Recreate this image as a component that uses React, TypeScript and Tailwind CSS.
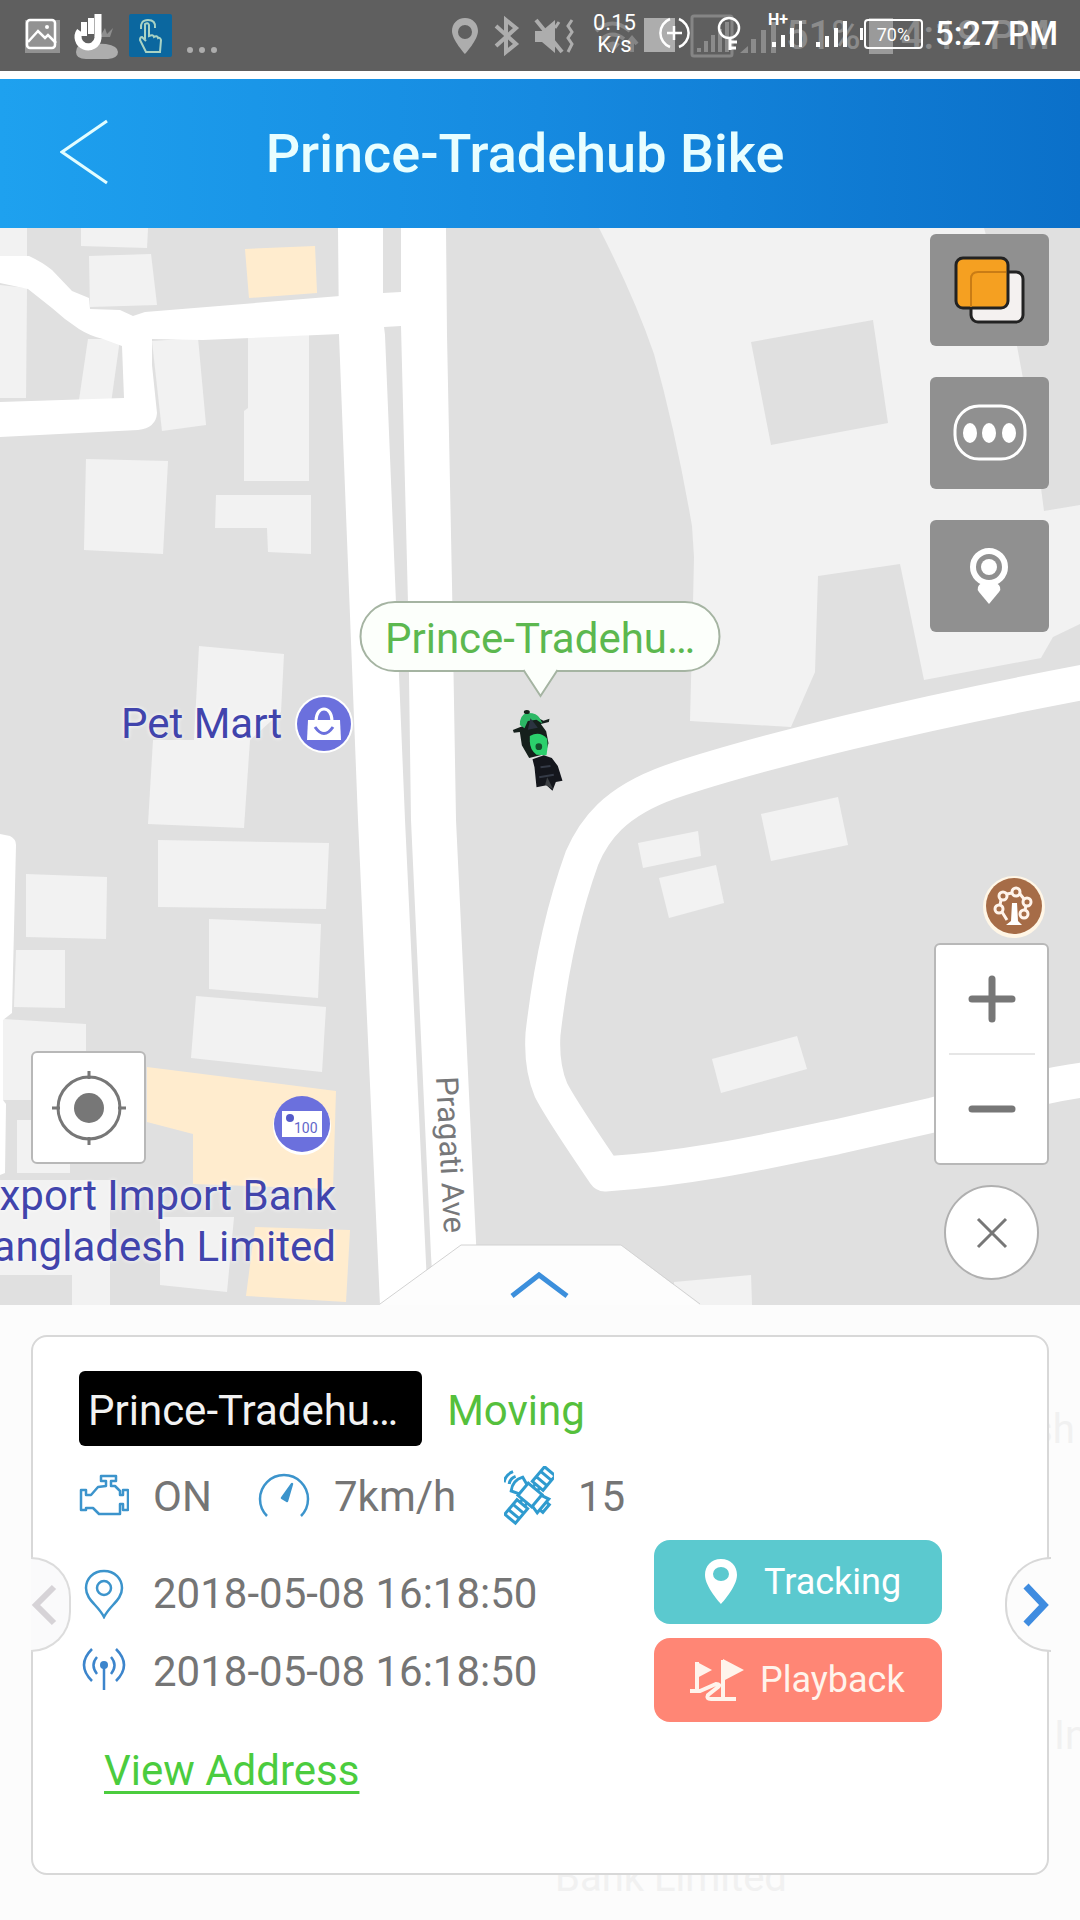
import type { ReactNode } from "react";

const buildings = [
  "0,0 27,0 27,30 0,28",
  "81,0 148,0 147,20 81,18",
  "89,28 151,26 157,77 90,79",
  "0,57 27,60 26,170 0,170",
  "88,111 120,111 111,175 79,172",
  "152,113 198,110 206,197 162,203",
  "248,109 309,107 309,253 244,253 244,183 248,180",
  "86,231 168,233 163,326 84,322",
  "216,267 311,267 311,326 268,324 267,300 215,300",
  "199,418 284,426 281,484 250,512 244,600 148,596 153,512 194,512",
  "158,612 329,615 326,681 158,679",
  "209,691 321,696 318,770 209,761",
  "196,768 326,779 322,844 191,830",
  "26,646 107,649 106,711 26,709",
  "16,722 65,722 65,780 14,779",
  "3,791 86,796 86,872 3,872",
  "17,892 70,892 70,945 17,945",
  "0,952 110,952 110,1077 72,1077 72,1047 0,1047",
  "160,989 234,989 227,1064 160,1057",
  "638,615 698,603 701,628 643,640",
  "659,650 716,637 724,675 669,690",
  "761,586 838,569 848,617 771,633",
  "712,831 797,808 807,841 721,865",
  "674,1054 751,1047 752,1077 674,1077",
];

const shops = [
  "245,21 315,18 317,65 249,70",
  "147,839 336,863 333,961 193,956 193,906 147,894",
  "255,999 350,1002 346,1074 246,1068",
];

function MapCanvas() {
  return (
    <svg
      className="absolute inset-0 h-full w-full"
      viewBox="0 0 1080 1077"
      preserveAspectRatio="xMidYMid slice"
      aria-hidden="true"
    >
      <rect width="1080" height="1077" fill="#e0e0e0" />
      <path
        fill="#f2f2f2"
        fillRule="evenodd"
        d="M599 0Q634 68 654 126Q676 205 692 298L694 329L693 375L690 493L791 499L815 444L818 348L900 336L924 452L1041 430L1053 409L1080 396V277L1044 283L1041 260L1022 145L1017 118L984 0ZM751 114L873 92L888 195L771 217Z"
      />
      {buildings.map((points) => (
        <polygon key={points} points={points} fill="#f2f2f2" />
      ))}
      {shops.map((points) => (
        <polygon key={points} points={points} fill="#ffecce" />
      ))}
      <g fill="#fff">
        <path d="M0 28H29Q42 34 52 42L72 63L89 70L90 81L120 82L133 88L145 84L340 68V106L203 112L152 111V137L157 185Q156 200 138 202L0 209V174L124 170L122 118L103 111Q90 108 79 101Q65 92 52 80L28 61L0 55Z" />
        <path d="M338 0H383V65L401 64V0H446L447 107L452 356L456 592L479 1077H434L431 1027L411 592L408 375L401 98L384 99L385 107L396 375L405 592L428 1077H380L358 592L339 107Z" />
        <path d="M0 606L10 608Q16 611 16 617L12 785L3 792V872L6 876L5 945L0 947Z" />
      </g>
      <path
        d="M1090 453C1000 470 900 492 850 504C780 521 720 537 670 554C614 574 594 602 582 630C562 685 550 745 543 806Q541 838 551 862Q560 880 605 946C700 940 790 918 836 909L933 887C1000 870 1040 857 1090 851"
        fill="none"
        stroke="#fff"
        strokeWidth="35"
        strokeLinejoin="round"
      />
      <text
        transform="translate(436 849) rotate(87)"
        fill="#77787a"
        fontSize="31"
        className="font-[Roboto,sans-serif]"
      >
        Pragati Ave
      </text>
    </svg>
  );
}

function StatusBar() {
  return (
    <div className="relative h-[71px] bg-[#5f5f5f] text-white">
      {/* dimmed icons of the bar underneath */}
      <div className="absolute inset-0 flex items-center justify-between text-[#adadad]">
        <svg width="240" height="71" viewBox="0 0 240 71" fill="currentColor" aria-hidden="true">
          <path d="M25 20h35v33H25z" opacity=".65" />
          <path d="M76 52q0-8 10-9l20 1q12 2 12 8 0 6-10 7H86q-10 0-10-7Z" />
          <path d="M96 35l3-5 2 5 4-7 2 6 6-6-3 9H94z" opacity=".6" />
          <rect x="129" y="14" width="43" height="43" rx="2" fill="#0b679f" />
          <path
            d="M146 41l-4-4q-2 0-2 3l6 12h14l1-12q-1-3-3-2-1-3-4-1-1-3-5-1V25q-1-3-4-1v15M141 29q-1-9 7-9t7 8"
            fill="none"
            stroke="#a9d3c4"
            strokeWidth="2"
          />
          <circle cx="190" cy="50" r="3" />
          <circle cx="202" cy="50" r="3" />
          <circle cx="214" cy="50" r="3" />
        </svg>
        <div className="flex items-center pr-[30px]">
          <svg width="340" height="71" viewBox="446 0 340 71" fill="currentColor" aria-hidden="true">
            <path d="M465 18c-8 0-13 6-13 13 0 9 13 23 13 23s13-14 13-23c0-7-5-13-13-13Zm0 7a7 7 0 1 1 0 14 7 7 0 0 1 0-14Z" fillRule="evenodd" />
            <path d="M496 26l20 18-10 8V20l10 8-20 18" fill="none" stroke="currentColor" strokeWidth="4" />
            <path d="M535 31h7l13-11v33l-13-11h-7z" />
            <path d="M536 20l26 32" stroke="currentColor" strokeWidth="4" />
            <path d="M559 22l-4 6M572 20l-4 6 4 6-4 6 4 6-4 8" fill="none" stroke="currentColor" strokeWidth="3" />
            <g fill="none" stroke="#858585" strokeWidth="4">
              <path d="M596 31q16-15 34 0M602 39q10-9 22 0" />
              <path d="M632 52V40M627 44l5-6 5 6" />
            </g>
            <path d="M613 52l-7-8q7-5 14 0z" fill="#858585" />
            <path d="M644 18h31v34h-31z" />
            <rect x="692" y="16" width="40" height="40" rx="2" fill="none" stroke="#858585" strokeWidth="3" />
            <path d="M697 52v-4h4v4zM704 52V41h4v11zM711 52V35h4v17zM718 52V29h4v23zM725 52V22h4v30z" fill="#8b8b8b" />
            <path d="M740 53l8-7v7zM751 53V39h5v14zM761 53V30h5v23zM771 53V22h5v31z" fill="#8b8b8b" />
          </svg>
          <div className="flex items-center gap-2 font-medium text-[#8b8b8b]">
            <span className="text-[40px]">51%</span>
            <span className="h-9 w-6 bg-[#9a9a9a]" />
            <span className="text-[40px]">4:19 PM</span>
          </div>
        </div>
      </div>
      <div className="relative flex h-[68px] items-center justify-between pr-[22px] pl-6">
        <svg width="80" height="50" viewBox="24 8 80 50" aria-hidden="true">
          <rect x="27" y="19" width="28" height="28" rx="3" fill="none" stroke="#fff" strokeWidth="2.5" />
          <path d="M28 41l10-11 7 7 3-3 8 8" fill="none" stroke="#fff" strokeWidth="2.5" />
          <circle cx="47" cy="26" r="2" fill="#fff" />
          <path d="M98 13v24a10 10 0 1 1-18-7" fill="none" stroke="#fff" strokeWidth="7" />
          <path d="M81 21h6v14h-6zM88 17h6v16h-6z" fill="#fff" />
        </svg>
        <div className="flex items-center">
          <div className="mr-5 text-center text-[22px] leading-[22px]">
            0.15
            <br />
            K/s
          </div>
          <svg width="112" height="54" viewBox="652 7 112 54" fill="none" stroke="#fff" strokeWidth="2.5" aria-hidden="true">
            <path d="M666 19a15 15 0 0 0 0 28M675 47a15 15 0 0 0 0-28M663 33h15M670 26v14" />
            <circle cx="725" cy="28" r="10" />
            <path d="M726 38v12M726 42h7M726 48h6" strokeWidth="3" />
          </svg>
          <div className="relative flex h-9 items-end gap-3">
            <span className="absolute -top-1.5 left-0 text-[16px] leading-5 font-bold">H+</span>
            <svg width="34" height="36" fill="#fff" aria-hidden="true">
              <path d="M4 26h4v5H4zM13 19h4v12h-4zM22 12h4v19h-4zM31 5h3v26h-3z" />
            </svg>
            <svg width="34" height="36" fill="#fff" aria-hidden="true">
              <path d="M2 26h4v5H2zM11 20h4v11h-4zM20 12h4v19h-4zM29 5h4v26h-4z" />
            </svg>
          </div>
          <span className="ml-3 h-3 w-[3px] bg-white" />
          <span className="mr-3 ml-px flex h-[30px] w-[59px] items-center justify-center rounded border-2 border-white text-[18px]">
            70%
          </span>
          <span className="text-[33px] font-medium">5:27 PM</span>
        </div>
      </div>
    </div>
  );
}

function ToolButton({ label, children }: { label: string; children: ReactNode }) {
  return (
    <button aria-label={label} className="flex h-[112px] w-[119px] items-center justify-center rounded-md bg-[#909090]">
      {children}
    </button>
  );
}

function MapPins() {
  return (
    <>
      <div className="absolute top-[464px] left-[121px] flex items-center gap-3 text-[42px] text-[#4144ac] [text-shadow:0_0_4px_white]">
        Pet Mart
        <svg width="60" height="60" viewBox="0 0 60 60" aria-hidden="true">
          <circle cx="30" cy="30" r="29" fill="#fff" />
          <circle cx="30" cy="30" r="27" fill="#6b70dd" />
          <path d="M14 26h32l1 20H13z" fill="#fff" />
          <path d="M22 27c0-16 16-16 16 0" fill="none" stroke="#fff" strokeWidth="3" />
          <path d="M21 33q9 13 18 0" fill="none" stroke="#6b70dd" strokeWidth="3" />
        </svg>
      </div>
      <svg className="absolute top-[866px] left-[272px]" width="60" height="62" viewBox="0 0 60 62" aria-hidden="true">
        <circle cx="30" cy="32" r="29" fill="#fff" />
        <circle cx="30" cy="30" r="28" fill="#6b70dd" />
        <path d="M10 17h40v26H10z" fill="#fff" />
        <circle cx="18" cy="24" r="4" fill="#555bc9" />
        <text x="22" y="39" fontSize="14" fill="#6266c9" className="font-[Roboto,sans-serif]">
          100
        </text>
      </svg>
      <p className="absolute top-[942px] right-[calc(100%-336px)] text-right text-[42px] leading-[51px] whitespace-nowrap text-[#4144ac] [text-shadow:0_0_4px_white]">
        Export Import Bank
        <br />
        Bangladesh Limited
      </p>
      <svg className="absolute top-[648px] right-[35px]" width="62" height="62" viewBox="0 0 62 62" aria-hidden="true">
        <circle cx="31" cy="31" r="31" fill="#fff6e6" />
        <circle cx="31" cy="30" r="28" fill="#a66c47" />
        <g fill="none" stroke="#fff3ea" strokeWidth="3">
          <circle cx="20" cy="20" r="4" />
          <circle cx="33" cy="16" r="4" />
          <circle cx="44" cy="26" r="4" />
          <circle cx="16" cy="33" r="4" />
          <circle cx="41" cy="38" r="4" />
          <path d="M24 18l5-1M37 18l4 5M18 24l-1 5M43 30l-1 4M19 36l5 8" />
        </g>
        <path d="M29 27h5l1 18 4 4H23l5-4z" fill="#fff" />
      </svg>
    </>
  );
}

function Vehicle() {
  return (
    <div className="absolute top-[373px] left-1/2 flex -translate-x-1/2 flex-col items-center">
      <div className="flex h-[71px] w-[361px] items-center justify-center rounded-full border-2 border-[#a5b4a2] bg-[#fcfffb] pt-1 text-[42px] text-[#5cb84f]">
        Prince-Tradehu…
      </div>
      <svg className="relative -mt-[3px]" width="36" height="29" viewBox="0 0 36 29" aria-hidden="true">
        <path d="M1 0L18 27L35 0" fill="#fcfffb" />
        <path d="M1 1L18 27L35 1" fill="none" stroke="#a5b4a2" strokeWidth="2" />
      </svg>
      <svg className="-mt-2" width="100" height="120" viewBox="0 0 300 360" aria-hidden="true">
        <path d="M67 120l30-12 8-26 26-4 28 14 18-6-2 10-24 6 16 22 7 36-10 32-48 12-22-38-6-40-18 2z" fill="#16201c" />
        <path d="M88 105q0-30 20-36 30-2 40 16l8 16-18-12-26 4-10 22z" fill="#2cb865" />
        <ellipse cx="109" cy="66" rx="9" ry="6" fill="#15221a" />
        <path d="M120 85l22 28-30 6z" fill="#2b3340" />
        <path d="M118 138q30-16 52 8 4 26-2 50l-30-2q-20-14-20-40z" fill="#2bd06c" />
        <circle cx="145" cy="170" r="10" fill="#14512e" />
        <path d="M126 208l34-12 24 8 18 24 14 44-20 4-10 26-18-16-30 6-6-60z" fill="#14161c" />
        <path d="M150 232l30-4M146 262l44-8" stroke="#343a46" strokeWidth="6" />
        <path d="M170 262l18 36-24-14z" fill="#3d4044" />
      </svg>
    </div>
  );
}

function MapControls() {
  return (
    <>
      <div className="absolute top-[6px] right-[31px] flex flex-col gap-[31px]">
        <ToolButton label="Map layers">
          <svg width="72" height="70" viewBox="0 0 72 70" aria-hidden="true">
            <rect x="17" y="17" width="52" height="50" rx="7" fill="#f4f1f0" stroke="#222" strokeWidth="3" />
            <rect x="2" y="3" width="52" height="50" rx="7" fill="#f5a021" stroke="#222" strokeWidth="3" />
            <path d="M17 52V24q0-7 7-7h28" fill="none" stroke="#c97c15" strokeWidth="2" />
          </svg>
        </ToolButton>
        <ToolButton label="More">
          <svg width="74" height="58" viewBox="0 0 74 58" fill="#fff" aria-hidden="true">
            <rect x="2" y="2" width="70" height="53" rx="24" fill="none" stroke="#fff" strokeWidth="3" />
            <ellipse cx="17" cy="29" rx="7" ry="10" />
            <ellipse cx="36" cy="29" rx="7" ry="10" />
            <ellipse cx="56" cy="29" rx="7" ry="10" />
          </svg>
        </ToolButton>
        <ToolButton label="Places">
          <svg width="42" height="58" viewBox="0 0 42 58" fill="#fff" aria-hidden="true">
            <circle cx="20" cy="20" r="16" fill="none" stroke="#fff" strokeWidth="6" />
            <circle cx="20" cy="20" r="8" />
            <path d="M14 35h12q8 5 4 10L20 57 10 45q-4-5 4-10Z" />
          </svg>
        </ToolButton>
      </div>

      <button
        aria-label="My location"
        className="absolute bottom-[141px] left-[31px] flex h-[113px] w-[115px] items-center justify-center rounded-md border-2 border-[#b8b8b8] bg-white"
      >
        <svg width="76" height="76" viewBox="0 0 76 76" fill="none" stroke="#777" strokeWidth="3" aria-hidden="true">
          <circle cx="38" cy="38" r="31" />
          <circle cx="38" cy="38" r="15" fill="#777" stroke="none" />
          <path d="M38 1v8M38 67v8M1 38h8M67 38h8" />
        </svg>
      </button>

      <div className="absolute right-[31px] bottom-[25px] flex flex-col items-center gap-5">
        <div className="flex w-[115px] flex-col items-center rounded-md border-2 border-[#b8b8b8] bg-white">
          <button aria-label="Zoom in" className="flex h-[108px] w-full items-center justify-center">
            <svg width="48" height="48" stroke="#777" strokeWidth="7" strokeLinecap="round" aria-hidden="true">
              <path d="M24 4v40M4 24h40" />
            </svg>
          </button>
          <span className="h-0.5 w-[86px] bg-[#e6e6e6]" />
          <button aria-label="Zoom out" className="flex h-[108px] w-full items-center justify-center">
            <svg width="48" height="48" stroke="#777" strokeWidth="7" strokeLinecap="round" aria-hidden="true">
              <path d="M4 24h40" />
            </svg>
          </button>
        </div>
        <button
          aria-label="Close"
          className="flex size-[95px] items-center justify-center rounded-full border-2 border-[#b0b0b0] bg-white"
        >
          <svg width="32" height="32" stroke="#777" strokeWidth="3" aria-hidden="true">
            <path d="M2 2l28 28M30 2L2 30" />
          </svg>
        </button>
      </div>

      <button aria-label="Expand details" className="absolute bottom-0 left-1/2 h-[61px] w-[320px] -translate-x-1/2">
        <svg width="320" height="61" viewBox="0 0 320 61" aria-hidden="true">
          <path d="M0 61L81 1H241L320 61Z" fill="#fdfdfd" />
          <path d="M0 60L81 1H241L320 60" fill="none" stroke="#d2d2d2" strokeWidth="1" />
          <path d="M132 52L159 31L187 52" fill="none" stroke="#3c8fdc" strokeWidth="5" />
        </svg>
      </button>
    </>
  );
}

function DetailsCard() {
  return (
    <section className="relative overflow-hidden bg-[#fcfcfc] px-[31px] pt-[30px] pb-[46px] text-[42px] leading-[50px] text-[#757575]">
      {/* neighbouring map labels faintly showing through the sheet */}
      <div aria-hidden="true" className="text-[40px] text-[#f1f1f1]">
        <span className="absolute top-[100px] left-[calc(100%-48px)]">sh</span>
        <span className="absolute top-[406px] left-[calc(100%-26px)]">In</span>
        <span className="absolute bottom-[18px] left-[555px]">Bank Limited</span>
      </div>

      <div className="relative rounded-2xl border-2 border-[#d8d8d8] bg-white pt-[34px] pr-[105px] pb-[77px] pl-[46px]">
        <div className="flex items-baseline gap-[25px]">
          <h2 className="rounded-md bg-black pt-[14px] pr-[24px] pb-[10px] pl-[9px] leading-[51px] text-[#f2f2f2]">Prince-Tradehu…</h2>
          <span className="text-[#55c03c]">Moving</span>
        </div>

        <ul className="mt-[20px] flex items-center">
          <li className="flex w-[179px] items-center gap-[24px]">
            <svg width="50" height="46" viewBox="0 0 50 46" fill="none" stroke="#3c94cc" strokeWidth="2.5" strokeLinejoin="round" aria-hidden="true">
              <path d="M22 2h15v5h-5v5h4l5 5v4h3v-5h5v20h-5v-6h-3v10H20l-6-6H7v2H2V16h5v5h5l7-8 8-1V7h-5z" />
            </svg>
            ON
          </li>
          <li className="flex w-[246px] items-center gap-[24px]">
            <svg width="52" height="50" viewBox="0 0 52 50" fill="none" stroke="#3c94cc" strokeWidth="2.5" aria-hidden="true">
              <path d="M9 44A24 24 0 1 1 43 44" />
              <path d="M24 26L34 12L29 29Z" fill="#3c94cc" strokeLinejoin="round" />
            </svg>
            7km/h
          </li>
          <li className="flex items-center gap-[24px]">
            <svg width="50" height="62" viewBox="0 0 50 62" fill="none" stroke="#2f9bcf" strokeWidth="3" aria-hidden="true">
              <g transform="translate(26 29) rotate(-50)">
                <rect x="-8" y="-9" width="16" height="18" />
                <path d="M12-7h19V7H12zM18-7V7M25-7V7M8-3h4M8 3h4" />
                <path d="M-12-7h-19V7h19zM-18-7V7M-25-7V7M-8-3h-4M-8 3h-4" />
                <path d="M-7 9l-2 8H9L7 9M-5 17v4H5v-4" />
                <path d="M-6-9l-3-8q9-6 18 0l-3 8M-5-23q5-3 10 0M-7-28q7-4 14 0" />
              </g>
            </svg>
            15
          </li>
        </ul>

        <div className="mt-[12px] flex items-start justify-between">
          <ul className="flex flex-col gap-[28px] pt-[29px]">
            <li className="flex items-center gap-[24px]">
              <span className="flex w-[50px] justify-center">
                <svg width="40" height="50" viewBox="0 0 40 50" fill="none" stroke="#3c94cc" strokeWidth="2.5" aria-hidden="true">
                  <path d="M20 2C9 2 2 10 2 19C2 31 14 36 20 48C26 36 38 31 38 19C38 10 31 2 20 2Z" />
                  <circle cx="20" cy="19" r="7" />
                </svg>
              </span>
              2018-05-08 16:18:50
            </li>
            <li className="flex items-center gap-[24px]">
              <span className="flex w-[50px] justify-center">
                <svg width="44" height="50" viewBox="0 0 44 50" fill="none" stroke="#3c85cc" strokeWidth="2.5" aria-hidden="true">
                  <path d="M22 20v23M15 10Q8 18 15 27M29 10Q36 18 29 27M10 2Q-6 18 10 34M34 2Q50 18 34 34" />
                  <circle cx="22" cy="18" r="4" fill="#3c85cc" stroke="none" />
                </svg>
              </span>
              2018-05-08 16:18:50
            </li>
          </ul>
          <div className="flex w-[288px] flex-col gap-[14px] text-[36px] text-white">
            <button className="flex h-[84px] items-center rounded-2xl bg-[#5bc9cf]">
              <span className="flex w-[110px] justify-end pr-[26px]">
                <svg width="34" height="48" viewBox="0 0 34 48" fill="#fff" aria-hidden="true">
                  <path fillRule="evenodd" d="M17 1C7 1 1 8 1 17C1 29 17 46 17 46S33 29 33 17C33 8 27 1 17 1ZM17 9a8 7 0 1 1 0 14a8 7 0 0 1 0-14Z" />
                </svg>
              </span>
              Tracking
            </button>
            <button className="flex h-[84px] items-center rounded-2xl bg-[#ff8675] text-[#fff4ec]">
              <span className="flex w-[106px] justify-end pr-[16px]">
                <svg width="54" height="46" viewBox="0 0 54 46" fill="currentColor" stroke="currentColor" aria-hidden="true">
                  <path d="M7 5l15 8-15 8zM33 2l21 11-21 11z" stroke="none" />
                  <path d="M7 5v28M0 34h10L26 27q5 0 2 3L18 38q-2 4 3 4h25M33 3v38" fill="none" strokeWidth="4" />
                </svg>
              </span>
              Playback
            </button>
          </div>
        </div>

        <a href="#address" className="mt-[24px] ml-[25px] inline-block text-[#4bcc3e] underline decoration-[3px] underline-offset-[6px]">
          View Address
        </a>
      </div>

      <button
        aria-label="Previous device"
        disabled
        className="absolute top-[252px] left-[31px] flex h-[95px] w-[40px] items-center rounded-r-full border-2 border-l-0 border-[#dcdcdc] bg-[#fafafb]"
      >
        <svg width="26" height="44" fill="none" stroke="#d6d3d7" strokeWidth="6" aria-hidden="true">
          <path d="M23 4L5 22L23 40" />
        </svg>
      </button>
      <button
        aria-label="Next device"
        className="absolute top-[252px] right-[29px] flex h-[95px] w-[46px] items-center justify-end rounded-l-full border-2 border-r-0 border-[#d8d8d8] bg-[#fcfcfc]"
      >
        <svg width="28" height="46" fill="none" stroke="#3f8ce0" strokeWidth="7" aria-hidden="true">
          <path d="M3 4L21 23L3 42" />
        </svg>
      </button>
    </section>
  );
}

export default function App() {
  return (
    <div className="flex min-h-screen flex-col overflow-hidden bg-white font-[Roboto,sans-serif]">
      <StatusBar />
      <header className="mt-2 flex h-[149px] items-center bg-linear-to-r from-[#1ea1ef] via-[#168ae0] to-[#0b70c9] text-white">
        <button aria-label="Back" className="w-[168px] pb-1 pl-[60px]">
          <svg width="50" height="66" fill="none" stroke="#e2fdff" strokeWidth="3" aria-hidden="true">
            <path d="M47 2L2 33L47 64" />
          </svg>
        </button>
        <h1 className="flex-1 pr-[198px] text-center text-[54px] font-medium text-[#e8feff]">Prince-Tradehub Bike</h1>
      </header>
      <main className="flex flex-1 flex-col">
        <div className="relative min-h-[1077px] flex-1 overflow-hidden">
          <MapCanvas />
          <MapPins />
          <Vehicle />
          <MapControls />
        </div>
        <DetailsCard />
      </main>
    </div>
  );
}
